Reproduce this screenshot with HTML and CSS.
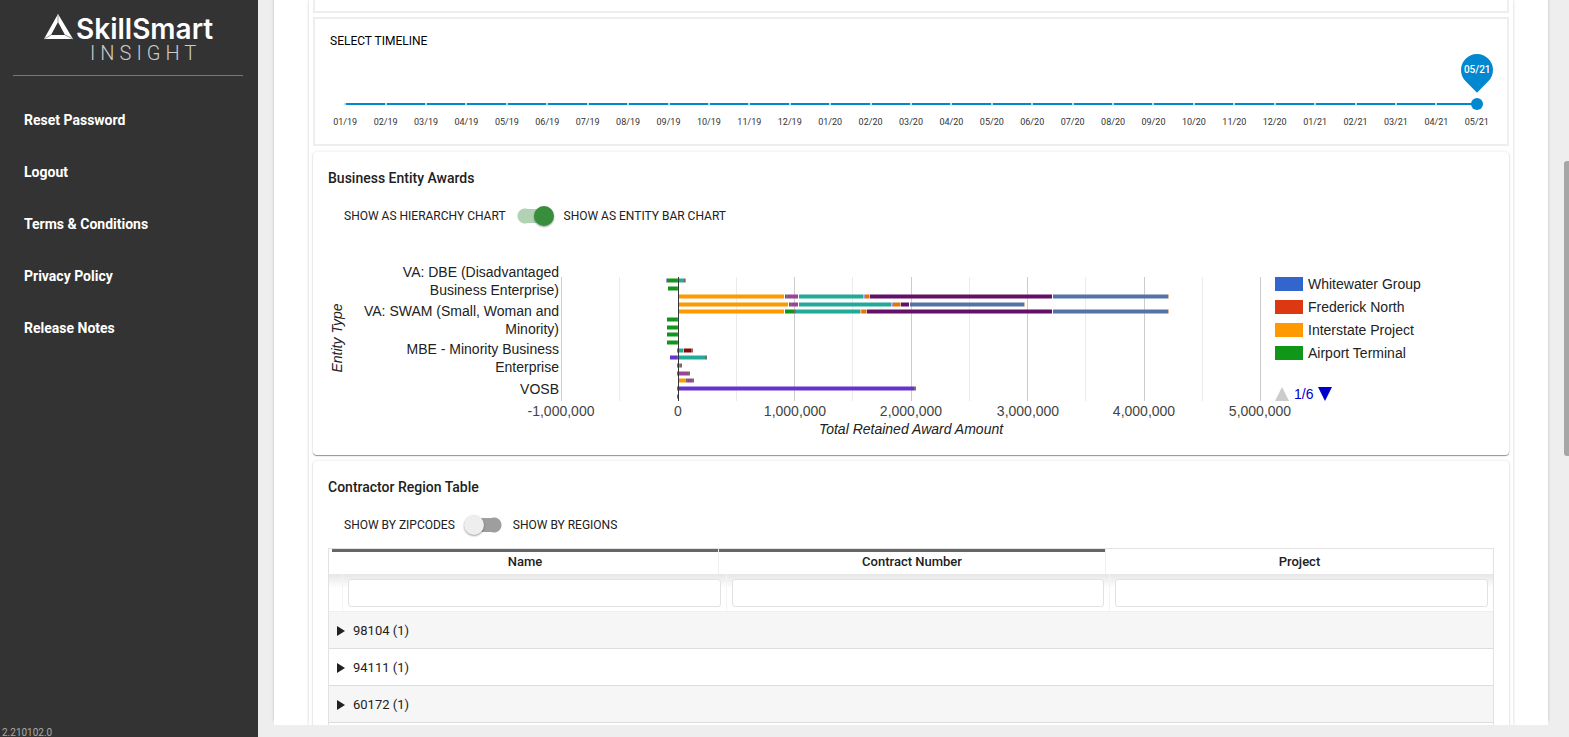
FILE: index.html
```html
<!DOCTYPE html>
<html lang="en">
<head>
<meta charset="utf-8">
<title>SkillSmart Insight</title>
<link rel="stylesheet" href="styles.css">
</head>
<body>
<aside class="sidebar">
  <div class="brand">
    <svg class="logo" width="172" height="52" role="img" aria-label="SkillSmart Insight">
      <path class="logo-mark" fill-rule="evenodd" d="M15 3 30 28H1ZM15 11 8 24H22Z"/>
      <path class="logo-facet" d="M15 3V11M1 28 8 24M30 28 22 24"/>
      <text class="logo-name" x="33" y="28">SkillSmart</text>
      <text class="logo-sub" x="47" y="49">INSIGHT</text>
    </svg>
  </div>
  <nav class="menu">
    <a href="#reset">Reset Password</a>
    <a href="#logout">Logout</a>
    <a href="#terms">Terms &amp; Conditions</a>
    <a href="#privacy">Privacy Policy</a>
    <a href="#notes">Release Notes</a>
  </nav>
  <div class="version">2.210102.0</div>
</aside>
<main class="content">
  <div class="paper">
    <div class="panel">
      <section class="box box-previous"></section>
      <section class="box timeline">
        <label class="timeline-title" for="timeline">SELECT TIMELINE</label>
        <div class="slider">
          <div class="bubble-row"><output class="bubble" for="timeline"><span>05/21</span></output></div>
          <input id="timeline" class="range" type="range" min="0" max="28" value="28">
          <ol class="ticks">
            <li>01/19</li><li>02/19</li><li>03/19</li><li>04/19</li><li>05/19</li><li>06/19</li><li>07/19</li><li>08/19</li><li>09/19</li><li>10/19</li><li>11/19</li><li>12/19</li><li>01/20</li><li>02/20</li><li>03/20</li><li>04/20</li><li>05/20</li><li>06/20</li><li>07/20</li><li>08/20</li><li>09/20</li><li>10/20</li><li>11/20</li><li>12/20</li><li>01/21</li><li>02/21</li><li>03/21</li><li>04/21</li><li>05/21</li>
          </ol>
        </div>
      </section>

      <section class="card">
        <h2>Business Entity Awards</h2>
        <div class="switch-row">
          <label for="chart-mode">SHOW AS HIERARCHY CHART</label>
          <input id="chart-mode" class="switch" type="checkbox" checked>
          <label for="chart-mode">SHOW AS ENTITY BAR CHART</label>
        </div>
        <svg class="chart" height="190">
          <g class="grid-minor"><path d="M291.5 27V151M408.5 27V151M524.5 27V151M641.5 27V151M757.5 27V151M874.5 27V151"/></g>
          <g class="grid-major"><path d="M233.5 27V151M466.5 27V151M583.5 27V151M699.5 27V151M816.5 27V151M932.5 27V151"/></g>
          <g class="bars">
            <path class="c-edge" d="M349 30.5h1M356 30.5h1M349 38.5h1M349 69.5h1M349 77.5h1M349 84.5h1M349 92.5h1M349 100.5h1M363 100.5h2M349 107.5h1M377 107.5h2M349 115.5h1M352 115.5h2M349 123.5h1M360 123.5h2M358 130.5h2M364 130.5h2M349 138.5h1M586 138.5h2M349 146.5h2M458 46.5h2M462 54.5h2M466 61.5h2"/>
            <path class="c-green" d="M339 30.5h10M340 38.5h9M457 46.5h1M461 54.5h1M457 61.5h9M339 69.5h10M339 77.5h10M339 84.5h10M339 92.5h10"/>
            <path class="c-orange" d="M351 46.5h105M351 54.5h109M351 61.5h105M351 130.5h7"/>
            <path class="c-teal" d="M351 30.5h5M471 46.5h64M471 54.5h92M468 61.5h64M351 100.5h4M351 107.5h26"/>
            <path class="c-purple" d="M460 46.5h10M464 54.5h6M351 123.5h9M360 130.5h4"/>
            <path class="c-lilac" d="M338 30.5h1M357 30.5h1M536 46.5h1M564 54.5h1M533 61.5h1"/>
            <path class="c-rust" d="M537 46.5h4M565 54.5h7M534 61.5h4M351 115.5h1"/>
            <path class="c-tan" d="M535 46.5h1M541 46.5h1M563 54.5h1M572 54.5h1M532 61.5h1M538 61.5h1M355 100.5h1M840 46.5h1M696 54.5h1M840 61.5h1"/>
            <path class="c-plum" d="M542 46.5h182M573 54.5h8M539 61.5h185"/>
            <path class="c-steel" d="M725 46.5h115M582 54.5h114M725 61.5h115"/>
            <path class="c-maroon" d="M356 100.5h7"/>
            <path class="c-violet" d="M342 107.5h7M351 138.5h235"/>
          </g>
          <path class="zero" d="M350.5 27V151"/>
          <g class="categories">
            <text x="231" y="27">VA: DBE (Disadvantaged</text><text x="231" y="45">Business Enterprise)</text>
            <text x="231" y="66">VA: SWAM (Small, Woman and</text><text x="231" y="84">Minority)</text>
            <text x="231" y="104">MBE - Minority Business</text><text x="231" y="122">Enterprise</text>
            <text x="231" y="144">VOSB</text>
          </g>
          <g class="scale">
            <text x="233" y="166">-1,000,000</text><text x="350" y="166">0</text><text x="467" y="166">1,000,000</text><text x="583" y="166">2,000,000</text><text x="700" y="166">3,000,000</text><text x="816" y="166">4,000,000</text><text x="932" y="166">5,000,000</text>
          </g>
          <text class="axis-title" x="583" y="184">Total Retained Award Amount</text>
          <text class="axis-title" transform="translate(14 88) rotate(-90)">Entity Type</text>
          <g class="legend">
            <rect x="947" y="27" width="28" height="14" fill="#3366cc"/><text x="980" y="39">Whitewater Group</text>
            <rect x="947" y="50" width="28" height="14" fill="#dc3912"/><text x="980" y="62">Frederick North</text>
            <rect x="947" y="73" width="28" height="14" fill="#ff9900"/><text x="980" y="85">Interstate Project</text>
            <rect x="947" y="96" width="28" height="14" fill="#109618"/><text x="980" y="108">Airport Terminal</text>
            <path fill="#cccccc" d="M954 137l7 14h-14z"/>
            <text class="pager" x="966" y="149">1/6</text>
            <path fill="#0000cc" d="M990 137h14l-7 14z"/>
          </g>
        </svg>
      </section>

      <section class="card">
        <h2>Contractor Region Table</h2>
        <div class="switch-row">
          <label for="region-mode">SHOW BY ZIPCODES</label>
          <input id="region-mode" class="switch" type="checkbox">
          <label for="region-mode">SHOW BY REGIONS</label>
        </div>
        <table class="regions">
          <thead>
            <tr>
              <th class="grouped first"><div>Name</div></th>
              <th class="grouped"><div>Contract Number</div></th>
              <th class="last"><div>Project</div></th>
            </tr>
          </thead>
          <tbody>
            <tr class="filters">
              <td colspan="3">
                <div class="filter-grid">
                  <div><input type="text" aria-label="Filter by name"></div>
                  <div><input type="text" aria-label="Filter by contract number"></div>
                  <div><input type="text" aria-label="Filter by project"></div>
                </div>
              </td>
            </tr>
            <tr class="group"><td colspan="3"><button type="button"><svg width="8" height="10"><path d="M0 0 8 5 0 10z"/></svg>98104 (1)</button></td></tr>
            <tr class="group"><td colspan="3"><button type="button"><svg width="8" height="10"><path d="M0 0 8 5 0 10z"/></svg>94111 (1)</button></td></tr>
            <tr class="group"><td colspan="3"><button type="button"><svg width="8" height="10"><path d="M0 0 8 5 0 10z"/></svg>60172 (1)</button></td></tr>
            <tr class="group"><td colspan="3"></td></tr>
          </tbody>
        </table>
      </section>
    </div>
  </div>
  <div class="scrollbar"><div class="thumb"></div></div>
</main>
</body>
</html>
```
FILE: styles.css
```css
* { box-sizing: border-box; }

body {
  margin: 0;
  height: 100vh;
  display: flex;
  overflow: hidden;
  background: #eee;
  color: #212121;
  font: 14px/20px Roboto, sans-serif;
}

/* Sidebar */
.sidebar {
  flex: 0 0 258px;
  display: flex;
  flex-direction: column;
  background: #333;
}
.brand {
  margin: 0 15px 0 13px;
  padding: 11px 0 12px 30px;
  border-bottom: 1px solid #777;
}
.logo { display: block; overflow: visible; }
.logo-mark { fill: #fff; }
.logo-facet { stroke: #999; stroke-width: 1; fill: none; }
.logo-name { font: 600 28px Inter, sans-serif; fill: #fff; }
.logo-sub { font: 300 20px Roboto, sans-serif; letter-spacing: 5px; fill: #ccc; }
.menu {
  flex: 1;
  display: flex;
  flex-direction: column;
  padding: 18px 24px;
}
.menu a {
  padding: 16px 0;
  color: #fff;
  font-weight: 700;
  text-decoration: none;
}
.version {
  padding-left: 2px;
  color: #aaa;
  font-size: 10px;
  line-height: 8px;
}

/* Page body */
.content {
  flex: 1;
  min-width: 0;
  display: flex;
}
.paper {
  flex: 1;
  min-width: 0;
  margin: 0 16px 12px;
  padding: 0 35px;
  overflow: hidden;
  background: #fff;
  box-shadow: 0 -4px 3px rgba(0, 0, 0, 0.2);
}
.panel {
  height: 100%;
  padding: 0 4px;
  box-shadow: 0 0 3px rgba(0, 0, 0, 0.2);
}
.scrollbar { flex: 0 0 5px; height: 100vh; padding-top: 161px; }
.thumb { height: 295px; border-radius: 3px 0 0 3px; background: #a6a6a6; }

.box { border: 2px solid #eee; background: #fff; }
.box-previous { height: 13px; margin-bottom: 4px; border-top: 0; }

/* Timeline */
.timeline { height: 129px; margin-bottom: 6px; padding: 12px 9px 0; }
.timeline-title {
  display: block;
  margin-left: 6px;
  color: #000;
  font-size: 12px;
  line-height: 20px;
}
.slider { position: relative; padding-top: 47px; }
.bubble-row {
  position: absolute;
  top: 3px;
  right: 5px;
}
.bubble {
  display: flex;
  align-items: center;
  justify-content: center;
  width: 32px;
  height: 32px;
  border-radius: 50% 50% 50% 0;
  background: #0288d1;
  color: #fff;
  font-size: 10px;
  font-weight: 500;
  transform: rotate(-45deg);
}
.bubble span { transform: rotate(45deg); }
.range {
  appearance: none;
  display: block;
  width: calc(100% - 31px);
  height: 12px;
  margin: 0 15px 0 16px;
  background: linear-gradient(#0288d1, #0288d1) center / calc(100% - 12px) 2px no-repeat;
}
.range::-webkit-slider-thumb {
  appearance: none;
  position: relative;
  z-index: 2;
  width: 12px;
  height: 12px;
  border-radius: 50%;
  background: #0288d1;
}
.ticks {
  display: grid;
  grid-template-columns: repeat(29, 1fr);
  margin: -7px 0 0;
  padding: 0 1px;
  list-style: none;
  color: #333;
  font-size: 9px;
  line-height: 12px;
  text-align: center;
  pointer-events: none;
}
.ticks li::before {
  content: "";
  display: block;
  width: 2px;
  height: 2px;
  margin: 0 auto 11px;
  background: #b3dbf1;
}
.ticks li:last-child::before { background: #0288d1; }

/* Cards */
.card {
  margin-bottom: 6px;
  padding: 16px 15px 15px;
  border-radius: 4px;
  background: #fff;
  box-shadow: 0 1px 1px rgba(0, 0, 0, 0.4), 0 0 3px rgba(0, 0, 0, 0.12);
}
.card h2 { margin: 0 0 9px; font-size: 14px; line-height: 20px; font-weight: 500; }
.switch-row {
  display: flex;
  align-items: center;
  height: 38px;
  padding-left: 16px;
  font-size: 12px;
}
.switch {
  appearance: none;
  display: flex;
  align-items: center;
  width: 58px;
  height: 38px;
  margin: 0;
  padding-left: 9px;
  background: linear-gradient(#9e9e9e, #9e9e9e) center / 20px 14px no-repeat,
    radial-gradient(circle at 19px 19px, #9e9e9e 7px, transparent 7px),
    radial-gradient(circle at 39px 19px, #9e9e9e 7px, transparent 8px);
}
.switch::before {
  content: "";
  width: 20px;
  height: 20px;
  border-radius: 50%;
  background: #eee;
  box-shadow: 0 1px 2px rgba(0, 0, 0, 0.4);
}
.switch:checked {
  padding-left: 28px;
  background: linear-gradient(#b1d2b3, #b1d2b3) center / 20px 14px no-repeat,
    radial-gradient(circle at 19px 19px, #b1d2b3 7px, transparent 8px),
    radial-gradient(circle at 39px 19px, #b1d2b3 7px, transparent 7px);
}
.switch:checked::before { background: #388e3c; }

/* Chart */
.chart {
  display: block;
  width: 100%;
  margin-top: 15px;
  font: 14px "Liberation Sans", Arial, sans-serif;
  fill: #222;
}
.chart text { white-space: pre; }
.grid-minor { stroke: #ebebeb; }
.grid-major { stroke: #ccc; }
.zero { stroke: #333; }
.bars { stroke-width: 4; }
.c-edge { stroke: #806868; }
.c-green { stroke: #109618; }
.c-orange { stroke: #ff9900; }
.c-teal { stroke: #22aa99; }
.c-purple { stroke: #994499; }
.c-lilac { stroke: #b78be0; }
.c-rust { stroke: #e67300; }
.c-tan { stroke: #d5b89a; }
.c-plum { stroke: #651067; }
.c-steel { stroke: #5574a6; }
.c-maroon { stroke: #8b0707; }
.c-violet { stroke: #6633cc; }
.categories { text-anchor: end; }
.scale { text-anchor: middle; fill: #444; }
.axis-title { text-anchor: middle; font-style: italic; }
.chart .pager { fill: #0000cc; }

/* Region table */
.regions {
  width: 100%;
  margin-top: 4px;
  border: 1px solid #e2e2e2;
  border-collapse: separate;
  border-spacing: 0;
  table-layout: fixed;
  font-size: 13px;
}
.regions th, .regions td { padding: 0; }
.regions th { font-weight: 500; border-left: 1px solid #eee; }
.regions th div {
  height: 25px;
  border-top: 3px solid transparent;
  line-height: 20px;
}
.regions th.first { width: 389px; padding-left: 3px; border-left: 0; }
.regions th.last { width: 388px; }
.regions th.grouped div { border-top-color: #666; }
.filters td {
  border-bottom: 1px solid #eee;
  background: linear-gradient(#e6e6e6, #fff 14px);
}
.filter-grid {
  display: grid;
  grid-template-columns: repeat(3, 1fr);
  height: 37px;
  padding-left: 13px;
}
.filter-grid div { padding: 5px 5px 4px; border-left: 1px solid #f4f4f4; }
.filter-grid input {
  display: block;
  width: 100%;
  height: 28px;
  padding: 0 8px;
  border: 1px solid #e2e2e2;
  border-radius: 3px;
  background: #fff;
  font: 13px Roboto, sans-serif;
}
.group td { height: 37px; padding-top: 2px; border-bottom: 1px solid #ddd; }
.group:nth-child(even) td { background: #f6f6f6; }
.group button {
  display: flex;
  align-items: center;
  gap: 8px;
  width: 100%;
  padding: 0 8px;
  border: 0;
  background: none;
  color: #212121;
  font: 13px/20px Roboto, sans-serif;
}
.group svg { fill: #212121; }
```
